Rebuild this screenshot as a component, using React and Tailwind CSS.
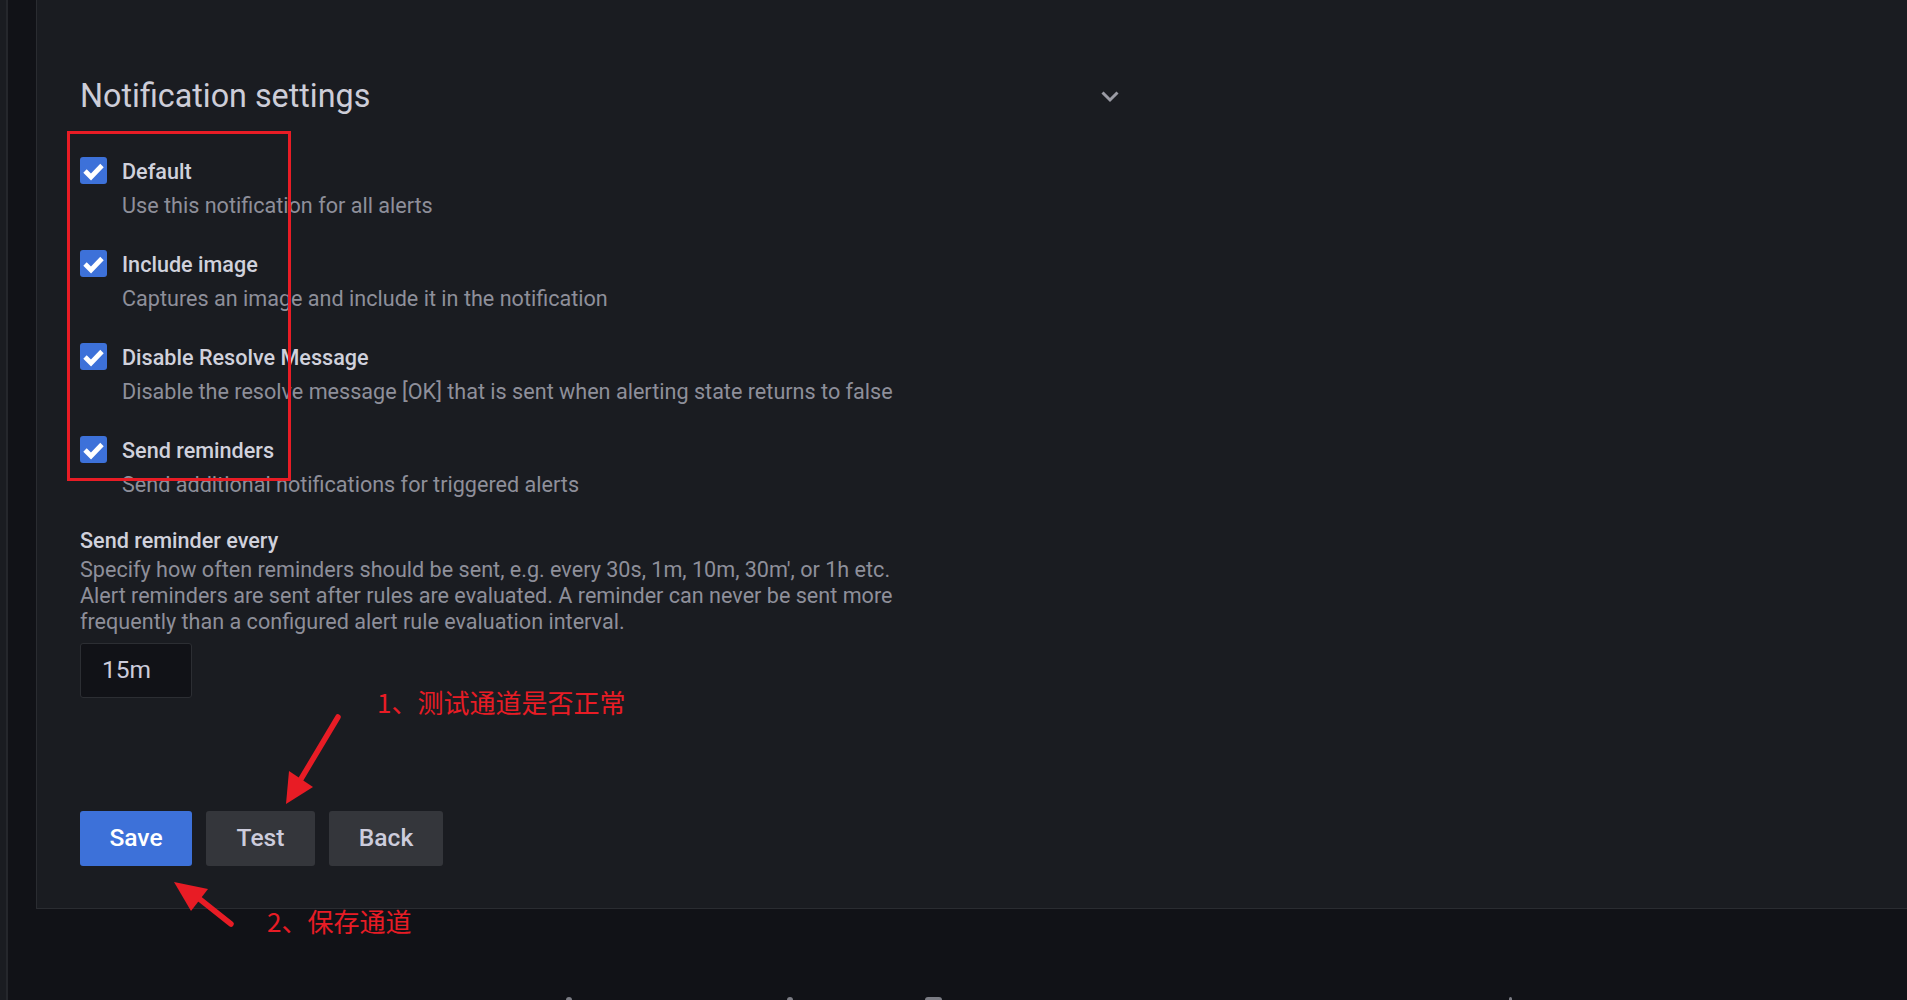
const rows = [
  ['Default', 'Use this notification for all alerts'],
  ['Include image', 'Captures an image and include it in the notification'],
  [
    'Disable Resolve Message',
    'Disable the resolve message [OK] that is sent when alerting state returns to false',
  ],
  ['Send reminders', 'Send additional notifications for triggered alerts'],
]

function Checkbox() {
  return (
    <div className="flex h-[27px] w-[27px] shrink-0 items-center justify-center rounded-[3px] bg-[#3d71d9]">
      <svg width="27" height="27" viewBox="0 0 27 27" fill="none">
        <path d="M5 14 L11 20 L22 8.5" stroke="#ffffff" strokeWidth="4.8" />
      </svg>
    </div>
  )
}

function OptionRow({ label, description }) {
  return (
    <div>
      <div className="flex h-[27px] items-start gap-[15px]">
        <Checkbox />
        <span className="text-[21.6px] leading-[29px] font-medium text-[#d0d1dc]">{label}</span>
      </div>
      <p className="mt-[8px] pl-[42px] text-[21.6px] leading-[27px] text-[#8e8f9a]">{description}</p>
    </div>
  )
}

function Annotations() {
  return (
    <div className="pointer-events-none absolute inset-0">
      <div className="absolute top-[131px] left-[67px] h-[350px] w-[224px] border-[3px] border-[#e81c25]" />
      <svg className="absolute top-0 left-0" width="1907" height="1000">
        <line x1="338" y1="717" x2="298" y2="784" stroke="#e81c25" strokeWidth="5.5" strokeLinecap="round" />
        <polygon points="286,804 289,771 313,787" fill="#e81c25" />
        <line x1="231" y1="924" x2="192" y2="893" stroke="#e81c25" strokeWidth="5.5" strokeLinecap="round" />
        <polygon points="174,882 208,889 191,911" fill="#e81c25" />
      </svg>
      <span className="absolute top-[687px] left-[377px] text-[26px] leading-[30px] text-[#e81c25] [font-family:'Noto_Sans_CJK_SC',sans-serif]">
        1、测试通道是否正常
      </span>
      <span className="absolute top-[906px] left-[267px] text-[26px] leading-[30px] text-[#e81c25] [font-family:'Noto_Sans_CJK_SC',sans-serif]">
        2、保存通道
      </span>
    </div>
  )
}

export default function App() {
  return (
    <div className="relative flex h-[1000px] w-full overflow-hidden bg-[#111217] [font-family:Roboto,'Liberation_Sans',sans-serif]">
      <div className="w-[6px] shrink-0 bg-[#1a1c21]" />
      <div className="w-[2px] shrink-0 bg-[#25272c]" />
      <div className="w-[28px] shrink-0" />

      <div className="flex min-w-0 flex-1 flex-col">
        <section className="border-b border-l border-[#2a2c31] bg-[#1a1c21] pt-[77px] pb-[42px] pl-[43px]">
          <div className="flex w-[1040px] items-center justify-between">
            <h3 className="text-[32.3px] leading-[38px] font-normal text-[#cdcdd8]">Notification settings</h3>
            <svg width="20" height="14" viewBox="0 0 20 14" fill="none">
              <path d="M2.5 3.5 L10 11 L17.5 3.5" stroke="#9a9ba4" strokeWidth="3" />
            </svg>
          </div>

          <div className="mt-[42px] flex flex-col gap-[31px]">
            {rows.map(([label, description]) => (
              <OptionRow key={label} label={label} description={description} />
            ))}
          </div>

          <div className="mt-[29px]">
            <p className="text-[21.6px] leading-[27px] font-medium text-[#d0d1dc]">Send reminder every</p>
            <p className="mt-[3px] text-[21.6px] leading-[26px] whitespace-nowrap text-[#8e8f9a]">
              <span className="block">Specify how often reminders should be sent, e.g. every 30s, 1m, 10m, 30m', or 1h etc.</span>
              <span className="block">Alert reminders are sent after rules are evaluated. A reminder can never be sent more</span>
              <span className="block">frequently than a configured alert rule evaluation interval.</span>
            </p>
            <div className="mt-[8px] flex h-[55px] w-[112px] items-center rounded-[3px] border border-[#2c2e33] bg-[#111217] pl-[21px] text-[24.5px] text-[#ccccdc]">
              15m
            </div>
          </div>

          <div className="mt-[113px] flex gap-[14px]">
            <button className="h-[55px] w-[112px] rounded-[3px] bg-[#3d71d9] text-[24.6px] font-medium text-white">Save</button>
            <button className="h-[55px] w-[109px] rounded-[3px] bg-[#34363b] text-[24.6px] font-medium text-[#ccccdc]">Test</button>
            <button className="h-[55px] w-[114px] rounded-[3px] bg-[#34363b] text-[24.6px] font-medium text-[#ccccdc]">Back</button>
          </div>
        </section>

        <footer className="flex flex-1 items-end">
          <div className="ml-[530px] h-[3px] w-[6px] rounded-t-sm bg-[#7b7c84]" />
          <div className="ml-[215px] h-[3px] w-[6px] rounded-t-sm bg-[#7b7c84]" />
          <div className="ml-[132px] h-[3px] w-[17px] rounded-t-sm bg-[#7b7c84]" />
          <div className="ml-[567px] h-[3px] w-[3px] rounded-t-sm bg-[#7b7c84]" />
        </footer>
      </div>

      <Annotations />
    </div>
  )
}
